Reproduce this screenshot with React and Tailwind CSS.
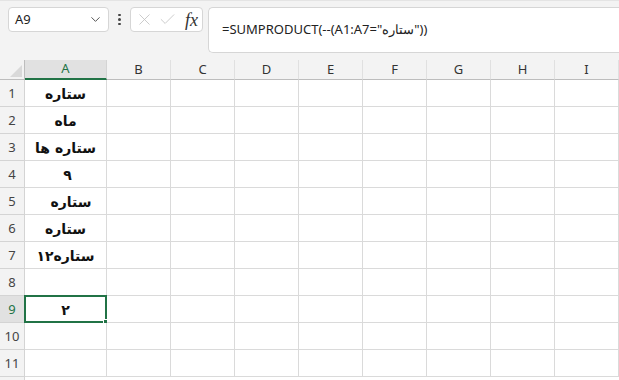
import { X, Check, ChevronDown } from "lucide-react";

const cols = [
  { key: "A", w: "w-[82px]" },
  { key: "B", w: "w-[64px]" },
  { key: "C", w: "w-[64px]" },
  { key: "D", w: "w-[64px]" },
  { key: "E", w: "w-[64px]" },
  { key: "F", w: "w-[64px]" },
  { key: "G", w: "w-[64px]" },
  { key: "H", w: "w-[64px]" },
  { key: "I", w: "w-[64px]" },
];

const values = {
  1: { text: "ستاره", cls: "" },
  2: { text: "ماه", cls: "" },
  3: { text: "ستاره ها", cls: "" },
  4: { text: "۹", cls: "pl-[4px]" },
  5: { text: "ستاره", cls: "pl-[11px]" },
  6: { text: "ستاره", cls: "" },
  7: { text: "ستاره۱۲", cls: "" },
  9: { text: "۲", cls: "" },
};

const rows = [1, 2, 3, 4, 5, 6, 7, 8, 9, 10, 11];

function Toolbar() {
  return (
    <div className="flex h-[60px] items-start border-t border-[#e4e4e4] bg-[#f3f3f3] pl-[8px] pt-[6px]">
      <div className="flex h-[25px] w-[101px] items-center justify-between rounded-[4px] border border-[#d6d6d6] bg-white pl-[6px] pr-[5px]">
        <span className="text-[13px] text-[#222]">A9</span>
        <ChevronDown className="h-[15px] w-[15px] text-[#555]" strokeWidth={1.6} />
      </div>
      <div className="flex h-[25px] w-[21px] flex-col items-center justify-center gap-[2px]">
        <span className="h-[2.5px] w-[2.5px] rounded-full bg-[#444]" />
        <span className="h-[2.5px] w-[2.5px] rounded-full bg-[#444]" />
        <span className="h-[2.5px] w-[2.5px] rounded-full bg-[#444]" />
      </div>
      <div className="flex h-[25px] w-[73px] items-center gap-[4px] rounded-[4px] border border-[#d6d6d6] bg-white pl-[4px]">
        <X className="h-[19px] w-[19px] text-[#c4c4c4]" strokeWidth={1.1} />
        <Check className="h-[19px] w-[19px] text-[#c4c4c4]" strokeWidth={1.1} />
        <span className="ml-[4px] font-['Liberation_Serif',serif] text-[18px] leading-none italic text-[#333]">
          fx
        </span>
      </div>
      <div className="ml-[5px] h-[46px] flex-1 rounded-l-[5px] border border-r-0 border-[#d6d6d6] bg-white pl-[13px] pt-[8px]">
        <span className="text-[13px] text-[#222]">
          =SUMPRODUCT(--(A1:A7="ستاره"))
        </span>
      </div>
    </div>
  );
}

function HeaderRow() {
  return (
    <div className="flex h-[20px]">
      <div className="relative h-[20px] w-[25px] shrink-0 border-r border-b border-[#bdbdbd] bg-[#f3f3f3]">
        <svg className="absolute left-[10px] top-[5px]" width="12" height="12" viewBox="0 0 12 12">
          <path d="M12 0 L12 12 L0 12 Z" fill="#d9d9d9" />
        </svg>
      </div>
      {cols.map((c) =>
        c.key === "A" ? (
          <div
            key={c.key}
            className={`${c.w} flex h-[20px] shrink-0 items-center justify-center border-r border-b-2 border-r-[#d4d4d4] border-b-[#217346] bg-[#e1e1e1] text-[13px] text-[#217346]`}
          >
            {c.key}
          </div>
        ) : (
          <div
            key={c.key}
            className={`${c.w} flex h-[20px] shrink-0 items-center justify-center border-r border-b border-r-[#e0e0e0] border-b-[#bdbdbd] bg-[#f3f3f3] text-[13px] text-[#333]`}
          >
            {c.key}
          </div>
        )
      )}
    </div>
  );
}

function Row({ n }) {
  const selected = n === 9;
  const v = values[n];
  return (
    <div className="flex h-[27px]">
      <div
        className={`flex h-[27px] w-[25px] shrink-0 items-end justify-center border-r border-b border-[#d4d4d4] pb-[3px] text-[13px] ${
          selected ? "bg-[#e1e1e1] text-[#217346]" : "bg-[#f3f3f3] text-[#444]"
        }`}
      >
        {n}
      </div>
      {cols.map((c) => (
        <div
          key={c.key}
          className={`${c.w} relative flex h-[27px] shrink-0 items-end justify-center border-r border-b border-[#dadada] bg-white pb-[2px]`}
        >
          {c.key === "A" && v && (
            <span
              dir="rtl"
              className={`font-['DejaVu_Sans',sans-serif] text-[14px] font-bold leading-[20px] text-[#111] ${v.cls}`}
            >
              {v.text}
            </span>
          )}
          {c.key === "A" && selected && (
            <>
              <div className="pointer-events-none absolute -left-[1px] -top-[1px] -right-[1px] -bottom-[1px] border-2 border-[#217346]" />
              <div className="absolute -bottom-[3px] -right-[3px] h-[6px] w-[6px] border border-white bg-[#217346]" />
            </>
          )}
        </div>
      ))}
    </div>
  );
}

export default function App() {
  return (
    <div className="h-[380px] w-[619px] overflow-hidden bg-white font-['Noto_Sans','Liberation_Sans',sans-serif]">
      <Toolbar />
      <HeaderRow />
      {rows.map((n) => (
        <Row key={n} n={n} />
      ))}
      <div className="flex h-[27px]">
        <div className="h-[27px] w-[25px] shrink-0 border-r border-[#d4d4d4] bg-[#f3f3f3]" />
        <div className="flex-1 bg-white" />
      </div>
    </div>
  );
}
